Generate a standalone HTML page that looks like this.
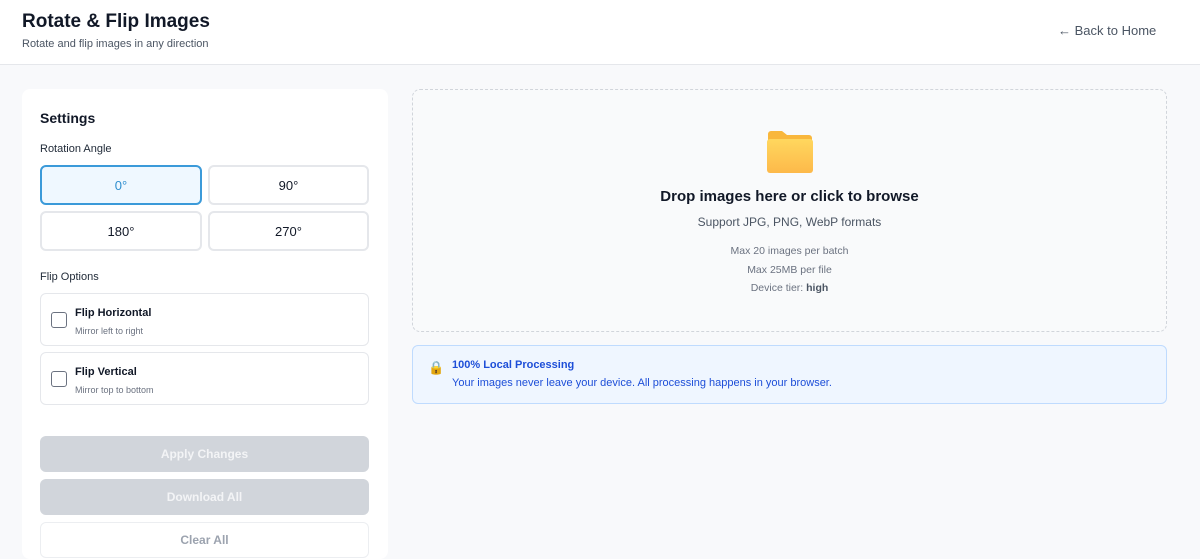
<!DOCTYPE html><html><head><style>
*{box-sizing:border-box;margin:0;padding:0}
body{width:1200px;height:547px;overflow:hidden;background:#f8f9fb;font-family:"Liberation Sans",sans-serif;position:relative;color:#111827}
.a{position:absolute}
.hdr{left:0;top:0;width:1200px;height:65px;background:#fff;border-bottom:1px solid #e5e7eb}
.btn{position:absolute;border:2px solid #e5e7eb;border-radius:6px;background:#fff;display:flex;align-items:center;justify-content:center;font-size:13px;color:#111827}
.card{position:absolute;left:40px;width:329px;height:53px;border:1px solid #e5e7eb;border-radius:6px;background:#fff}
.cb{position:absolute;left:10px;top:18px;width:16px;height:16px;border:1.5px solid #6b7280;border-radius:3px}
.ct{position:absolute;left:34px;top:13px;font-size:11px;font-weight:bold;color:#111827}
.cs{position:absolute;left:34px;top:32px;font-size:9px;color:#6b7280}
.gb{position:absolute;left:40px;width:329px;height:36px;border-radius:6px;background:#d1d5db;color:#f3f4f6;font-weight:bold;font-size:12px;display:flex;align-items:center;justify-content:center}
.c{text-align:center;width:755px;left:412px}
</style></head><body>
<div class="a hdr"></div>
<div class="a" style="left:22px;top:11px;font-size:19px;font-weight:bold">Rotate &amp; Flip Images</div>
<div class="a" style="left:22px;top:38px;font-size:11px;color:#4b5563">Rotate and flip images in any direction</div>
<div class="a" style="left:1058px;top:23px;font-size:13px;color:#4b5563">← Back to Home</div>

<div class="a" style="left:22px;top:89px;width:366px;height:470px;background:#fff;border-radius:8px"></div>
<div class="a" style="left:40px;top:110px;font-size:14px;font-weight:bold">Settings</div>
<div class="a" style="left:40px;top:143px;font-size:11px;color:#1f2937">Rotation Angle</div>
<div class="btn" style="left:40px;top:165px;width:162px;height:40px;border-color:#3b9ad9;background:#eff8ff;color:#2f8fcf">0°</div>
<div class="btn" style="left:208px;top:165px;width:161px;height:40px">90°</div>
<div class="btn" style="left:40px;top:211px;width:162px;height:40px">180°</div>
<div class="btn" style="left:208px;top:211px;width:161px;height:40px">270°</div>
<div class="a" style="left:40px;top:271px;font-size:11px;color:#1f2937">Flip Options</div>
<div class="card" style="top:293px"><div class="cb"></div><div class="ct">Flip Horizontal</div><div class="cs">Mirror left to right</div></div>
<div class="card" style="top:352px"><div class="cb"></div><div class="ct">Flip Vertical</div><div class="cs">Mirror top to bottom</div></div>
<div class="gb" style="top:436px">Apply Changes</div>
<div class="gb" style="top:479px">Download All</div>
<div class="gb" style="top:522px;background:#fff;border:1px solid #eceef1;color:#9ca3af">Clear All</div>

<div class="a" style="left:412px;top:89px;width:755px;height:243px;border:1.5px dashed #d1d5db;border-radius:8px;background:#f9fafb"></div>
<svg class="a" style="left:766px;top:130px" width="48" height="44" viewBox="0 0 48 44"><defs><linearGradient id="g" x1="0" y1="0" x2="0" y2="1"><stop offset="0" stop-color="#ffd75e"/><stop offset="1" stop-color="#fdb94a"/></linearGradient></defs><path d="M2 4a3 3 0 0 1 3-3h11l5 4h22a3 3 0 0 1 3 3v4H2z" fill="#f9b73c"/><rect x="1" y="9" width="46" height="34" rx="3" fill="url(#g)"/></svg>
<div class="a c" style="top:188px;font-size:15px;font-weight:bold">Drop images here or click to browse</div>
<div class="a c" style="top:215px;font-size:12px;color:#4b5563">Support JPG, PNG, WebP formats</div>
<div class="a c" style="top:242px;font-size:10.5px;color:#6b7280;line-height:18.5px">Max 20 images per batch<br>Max 25MB per file<br>Device tier: <b style="color:#4b5563">high</b></div>

<div class="a" style="left:412px;top:345px;width:755px;height:59px;background:#eff6ff;border:1px solid #bfdbfe;border-radius:6px"></div>
<div class="a" style="left:428px;top:360px;font-size:13px">🔒</div>
<div class="a" style="left:452px;top:359px;font-size:11px;font-weight:bold;color:#1d4ed8">100% Local Processing</div>
<div class="a" style="left:452px;top:377px;font-size:11px;color:#1d4ed8">Your images never leave your device. All processing happens in your browser.</div>
</body></html>
